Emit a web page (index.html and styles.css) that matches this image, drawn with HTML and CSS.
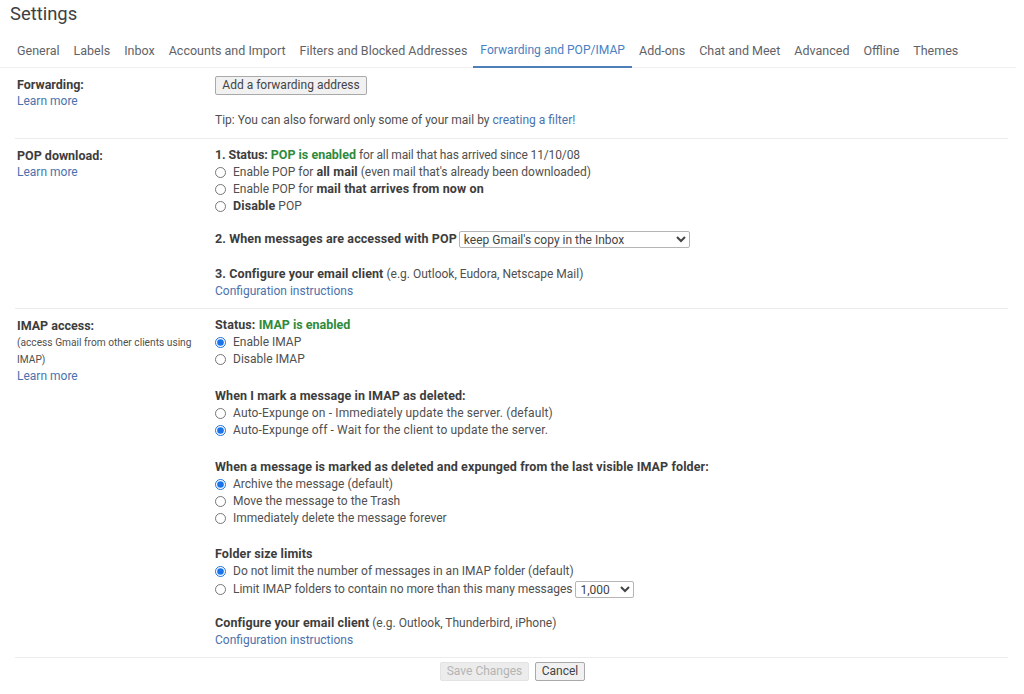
FILE: index.html
```html
<!DOCTYPE html>
<html lang="en">
<head>
<meta charset="utf-8">
<title>Settings</title>
<link rel="stylesheet" href="styles.css">
</head>
<body>
<div class="page">
  <h1 class="title">Settings</h1>
  <nav class="tabs">
    <a class="tab">General</a>
    <a class="tab">Labels</a>
    <a class="tab">Inbox</a>
    <a class="tab">Accounts and Import</a>
    <a class="tab">Filters and Blocked Addresses</a>
    <a class="tab active">Forwarding and POP/IMAP</a>
    <a class="tab">Add-ons</a>
    <a class="tab">Chat and Meet</a>
    <a class="tab">Advanced</a>
    <a class="tab">Offline</a>
    <a class="tab">Themes</a>
  </nav>

  <section class="row row-forward">
    <div class="side">
      <div class="label">Forwarding:</div>
      <a class="link">Learn more</a>
    </div>
    <div class="main">
      <button class="btn add-btn" type="button">Add a forwarding address</button>
      <div class="tip">Tip: You can also forward only some of your mail by <a class="link">creating a filter!</a></div>
    </div>
  </section>

  <section class="row row-pop">
    <div class="side">
      <div class="label">POP download:</div>
      <a class="link">Learn more</a>
    </div>
    <div class="main">
      <div class="line"><b class="tight">1. Status: </b><b class="green">POP is enabled</b> <span class="since">for all mail that has arrived since 11/10/08</span></div>
      <label class="opt"><input type="radio" name="pop"><span>Enable POP for <b>all mail</b> (even mail that's already been downloaded)</span></label>
      <label class="opt"><input type="radio" name="pop"><span>Enable POP for <b>mail that arrives from now on</b></span></label>
      <label class="opt"><input type="radio" name="pop"><span><b>Disable</b> POP</span></label>
      <div class="line gap-select"><b>2. When messages are accessed with POP</b>
        <select class="sel sel-wide"><option>keep Gmail's copy in the Inbox</option></select>
      </div>
      <div class="line gap-after"><b>3. Configure your email client</b> (e.g. Outlook, Eudora, Netscape Mail)</div>
      <div class="line"><a class="link">Configuration instructions</a></div>
    </div>
  </section>

  <section class="row row-imap">
    <div class="side">
      <div class="label">IMAP access:</div>
      <div class="note">(access Gmail from other clients using IMAP)</div>
      <a class="link">Learn more</a>
    </div>
    <div class="main">
      <div class="line"><b>Status: </b><b class="green">IMAP is enabled</b></div>
      <label class="opt"><input type="radio" name="imap" checked><span>Enable IMAP</span></label>
      <label class="opt"><input type="radio" name="imap"><span>Disable IMAP</span></label>

      <div class="line gap-big"><b>When I mark a message in IMAP as deleted:</b></div>
      <label class="opt opt-wide"><input type="radio" name="exp"><span>Auto-Expunge on - Immediately update the server. (default)</span></label>
      <label class="opt opt-wide"><input type="radio" name="exp" checked><span>Auto-Expunge off - Wait for the client to update the server.</span></label>

      <div class="line gap-big"><b>When a message is marked as deleted and expunged from the last visible IMAP folder:</b></div>
      <label class="opt"><input type="radio" name="del" checked><span>Archive the message (default)</span></label>
      <label class="opt"><input type="radio" name="del"><span>Move the message to the Trash</span></label>
      <label class="opt"><input type="radio" name="del"><span>Immediately delete the message forever</span></label>

      <div class="line gap-mid"><b>Folder size limits</b></div>
      <label class="opt"><input type="radio" name="size" checked><span>Do not limit the number of messages in an IMAP folder (default)</span></label>
      <label class="opt opt-select"><input type="radio" name="size"><span class="limit">Limit IMAP folders to contain no more than this many messages</span>
        <select class="sel sel-small"><option>1,000</option></select>
      </label>

      <div class="line gap"><b>Configure your email client</b> (e.g. Outlook, Thunderbird, iPhone)</div>
      <div class="line"><a class="link">Configuration instructions</a></div>
    </div>
  </section>

  <footer class="actions">
    <button class="btn save" type="button" disabled>Save Changes</button>
    <button class="btn cancel" type="button">Cancel</button>
  </footer>
</div>
</body>
</html>
```
FILE: styles.css
```css
* { box-sizing: border-box; }
html, body { margin: 0; padding: 0; background: #fff; }
body {
  font-family: Roboto, "Liberation Sans", sans-serif;
  font-size: 12px;
  line-height: 17px;
  color: #505050;
}
.page { width: 1016px; height: 694px; overflow: hidden; }
.title {
  margin: 0;
  padding: 2px 0 0 10px;
  height: 34px;
  font-size: 18.4px;
  line-height: 24px;
  font-weight: 400;
  color: #3c4043;
}
.tabs {
  display: flex;
  padding-left: 10px;
  height: 34px;
  border-bottom: 1px solid #eeeeee;
}
.tab {
  padding: 8px 7px 0;
  height: 34px;
  font-size: 12.5px;
  color: #5f6368;
  white-space: nowrap;
}
.tab.active {
  font-size: 12.1px;
  margin-left: -1px;
  padding: 8px 7px 0;
  color: #4a7fc1;
  border-bottom: 2px solid #4f7fb8;
}
.row {
  display: grid;
  grid-template-columns: 198px 1fr;
  margin: 0 8px 0 15px;
  padding-left: 2px;
  padding-top: 8px;
  border-bottom: 1px solid #ececec;
}
.row-forward { height: 71px; }
.row-pop { height: 170px; }
.row-imap { height: 349px; }
.label { font-size: 12.5px; font-weight: 700; color: #3d3d3d; }
.note { font-size: 10.2px; line-height: 17px; width: 180px; color: #505050; }
b { font-size: 12.5px; line-height: 1; letter-spacing: 0.1px; font-weight: 700; color: #3d3d3d; }
b.tight { letter-spacing: -0.1px; }
b.green { color: #2f8a3c; letter-spacing: 0; }
.since { letter-spacing: -0.13px; }
.limit { letter-spacing: -0.05px; }
.link { color: #4a72ad; }
.side .link { display: block; }
.line { min-height: 17px; white-space: nowrap; }
.opt {
  display: flex;
  align-items: center;
  height: 17px;
  white-space: nowrap;
}
.opt-wide { letter-spacing: 0.13px; }
.opt input {
  margin: 0 7px 0 0;
  width: 11px;
  height: 11px;
  accent-color: #1a73e8;
}
.opt-select { height: 18px; }
.tip { margin-top: 17px; }
.gap { margin-top: 17px; }
.gap-select { margin-top: 16px; display: flex; align-items: center; gap: 2px; }
.gap-after { margin-top: 18px; }
.gap-big { margin-top: 20px; }
.gap-mid { margin-top: 19px; }
.btn {
  font-family: inherit;
  font-size: 12px;
  line-height: 17px;
  color: #444;
  background: #f1f1f1;
  border: 1px solid #a9a9a9;
  border-radius: 2px;
  padding: 0;
  height: 19px;
  white-space: nowrap;
}
.add-btn { display: block; width: 152px; }
.sel {
  font-family: inherit;
  font-size: 12px;
  color: #444;
  background: #fff;
  border: 1px solid #b5b5b5;
  border-radius: 2px;
  height: 17px;
  padding: 0;
}
.sel-wide { width: 231px; }
.sel-small { width: 59px; margin-left: 3px; }
.actions {
  display: flex;
  justify-content: center;
  gap: 6px;
  padding-top: 4px;
  padding-left: 10px;
  margin-left: 15px;
  width: 985px;
}
.save { width: 89px; background: #ececec; color: #b4b4b4; border-color: #e3e3e3; }
.cancel { width: 50px; }
```
